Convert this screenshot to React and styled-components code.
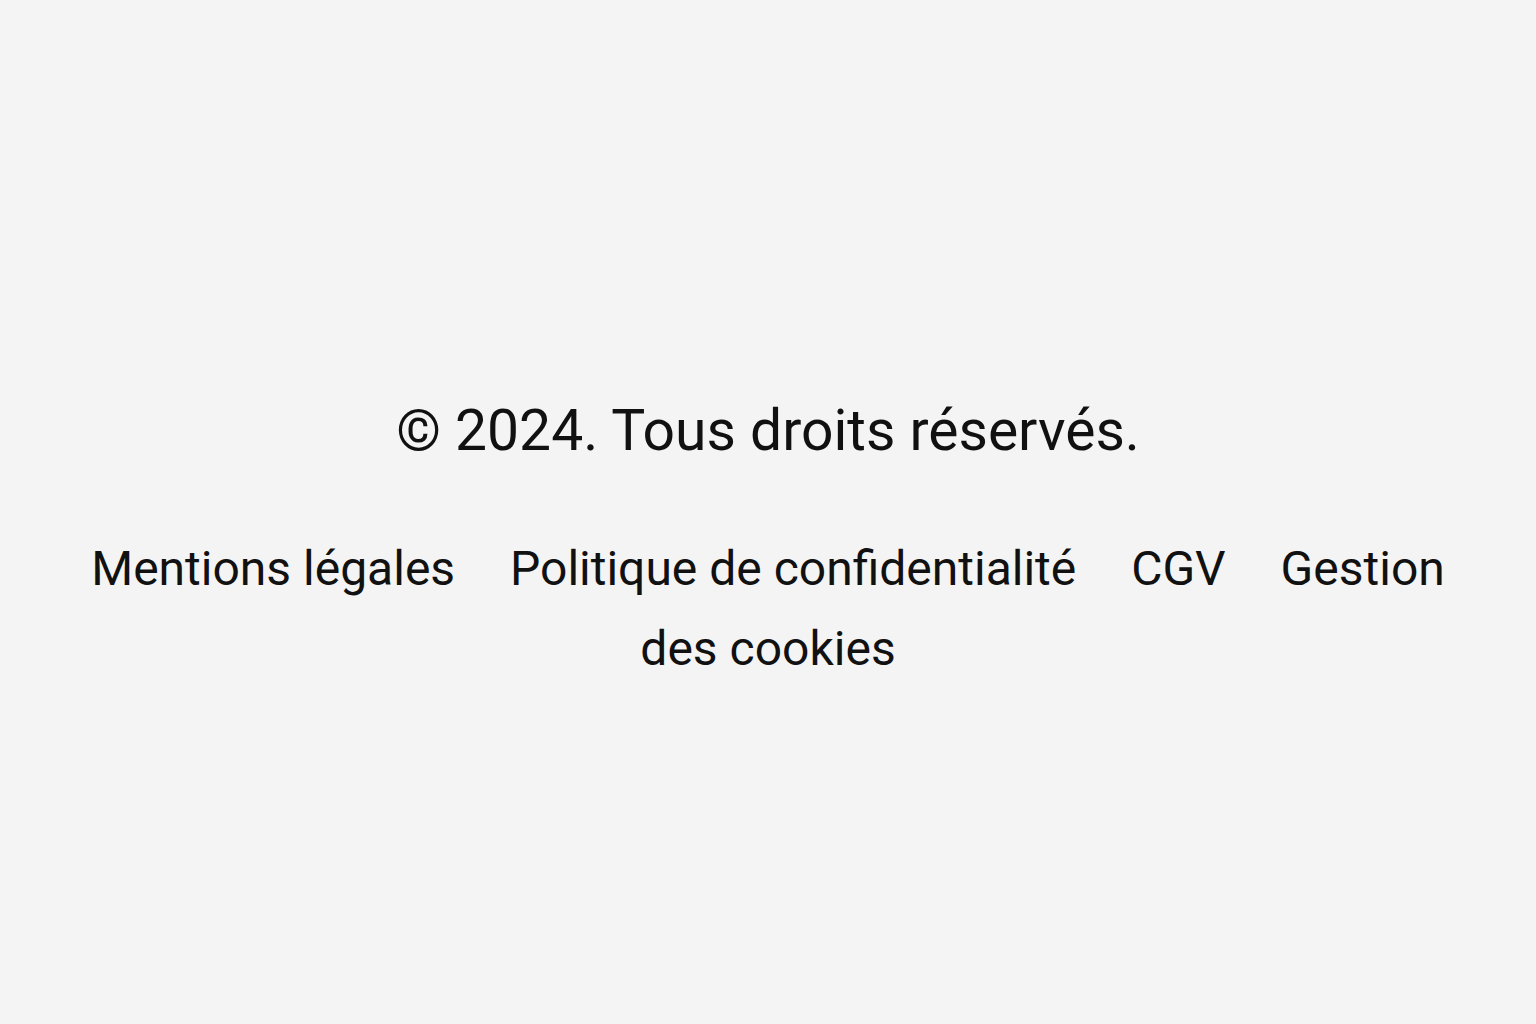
import React from 'react';
import styled, { createGlobalStyle } from 'styled-components';

const GlobalStyle = createGlobalStyle`
  html, body {
    margin: 0;
    padding: 0;
    background: #f4f4f4;
  }
  body {
    font-family: Roboto, "Noto Sans", "Liberation Sans", sans-serif;
    color: #111;
  }
`;

const Page = styled.div`
  min-height: 1024px;
  padding-top: 396px;
  box-sizing: border-box;
  text-align: center;
`;

const Copyright = styled.p`
  margin: 0;
  font-size: 57px;
  line-height: 70px;
  font-weight: 400;
`;

const Links = styled.nav`
  margin: 63px auto 0;
  width: 1420px;
  font-size: 48px;
  line-height: 80px;
`;

const LinkItem = styled.a`
  color: inherit;
  text-decoration: none;

  & + & {
    margin-left: 43px;
  }
`;

const links = [
  'Mentions légales',
  'Politique de confidentialité',
  'CGV',
  'Gestion des cookies',
];

function App() {
  return (
    <>
      <GlobalStyle />
      <Page>
        <Copyright>© 2024. Tous droits réservés.</Copyright>
        <Links>
          {links.map((label, i) => (
            <React.Fragment key={label}>
              {i > 0 && ' '}
              <LinkItem href="#">{label}</LinkItem>
            </React.Fragment>
          ))}
        </Links>
      </Page>
    </>
  );
}

export default App;
